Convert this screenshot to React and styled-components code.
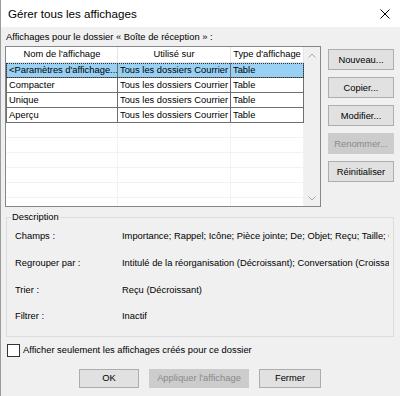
import React from 'react';
import styled, { createGlobalStyle } from 'styled-components';

const GlobalStyle = createGlobalStyle`
  html, body { margin: 0; padding: 0; }
  body {
    font-family: "Liberation Sans", Arial, sans-serif;
    font-size: 9.35px;
    color: #000;
    background: #f0f0f0;
  }
`;

const Window = styled.div`
  width: 400px;
  height: 396px;
  box-sizing: border-box;
  border-left: 1px solid #9b9b9b;
  background: #f0f0f0;
  display: flex;
  flex-direction: column;
  overflow: hidden;
`;

const TitleBar = styled.div`
  height: 27px;
  flex: none;
  background: #fff;
  display: flex;
  align-items: center;
  justify-content: space-between;
  padding: 0 10px 0 7px;
  font-size: 11.6px;
  color: #000;
`;

const Body = styled.div`
  padding: 4px 6px 0 4px;
  display: flex;
  flex-direction: column;
`;

const Caption = styled.div`
  line-height: 12px;
  margin-left: 1px;
  margin-bottom: 3px;
`;

const TopRow = styled.div`
  display: flex;
  gap: 7px;
  align-items: flex-start;
`;

const ListBox = styled.div`
  width: 316px;
  height: 161px;
  box-sizing: border-box;
  border: 1px solid #828790;
  background: #fff;
  display: flex;
`;

const Grid = styled.div`
  width: 298px;
  display: flex;
  flex-direction: column;
  overflow: hidden;
`;

const Row = styled.div`
  display: grid;
  grid-template-columns: 112px 113px 73px;
  height: ${p => (p.$head ? 16 : 15)}px;
  background: ${p => (p.$selected ? '#99d1f4' : 'transparent')};
  outline: ${p => (p.$selected ? '1px dotted #333' : 'none')};
  outline-offset: -1px;
  flex: none;
`;

const Cell = styled.div`
  box-sizing: border-box;
  padding: 0 2px;
  line-height: 14px;
  white-space: nowrap;
  overflow: hidden;
  text-align: ${p => (p.$center ? 'center' : 'left')};
  border-right: 1px solid ${p => p.$line};
  border-bottom: 1px solid ${p => p.$line};
  &:first-child {
    border-left: 1px solid ${p => (p.$first ? p.$line : 'transparent')};
  }
`;

const Scroll = styled.div`
  flex: 1;
  background: #f0f0f0;
  display: flex;
  flex-direction: column;
  justify-content: space-between;
  align-items: center;
  padding: 6px 0 5px;
  color: #a6a6a6;
`;

const SideButtons = styled.div`
  display: flex;
  flex-direction: column;
  gap: 7px;
  padding-top: 3px;
`;

const Button = styled.button`
  font: inherit;
  width: ${p => p.$w || 66}px;
  height: ${p => p.$h || 21}px;
  padding: 0;
  box-sizing: border-box;
  background: ${p => (p.disabled ? '#cccccc' : '#e1e1e1')};
  border: 1px solid ${p => (p.disabled ? '#cccccc' : '#adadad')};
  color: ${p => (p.disabled ? '#8a8a8a' : '#000')};
  border-radius: 0;
`;

const Group = styled.fieldset`
  margin: 4px 0 0 1px;
  width: 388px;
  box-sizing: border-box;
  border: 1px solid #dcdcdc;
  padding: 0 4px 6px 8px;
  min-width: 0;
`;

const Legend = styled.legend`
  padding: 0 1px;
  margin-left: -4px;
  line-height: 12px;
  color: #000;
`;

const Props = styled.div`
  display: grid;
  grid-template-columns: 107px 1fr;
  grid-auto-rows: 26.7px;
  align-items: center;
`;

const PropText = styled.div`
  white-space: nowrap;
  overflow: hidden;
`;

const CheckRow = styled.label`
  display: flex;
  align-items: center;
  gap: 3px;
  margin: 7px 0 0 2px;
  line-height: 13px;
`;

const Box = styled.span`
  width: 13px;
  height: 13px;
  box-sizing: border-box;
  border: 1px solid #333;
  background: #fff;
  flex: none;
`;

const Footer = styled.div`
  display: flex;
  justify-content: center;
  gap: 10px;
  margin-top: 12px;
  padding-left: 1px;
`;

const Chevron = ({ down }) => (
  <svg width="8" height="5" viewBox="0 0 8 5">
    <path d={down ? 'M0.5 0.5 L4 4 L7.5 0.5' : 'M0.5 4.5 L4 1 L7.5 4.5'} fill="none" stroke="currentColor" strokeWidth="1" />
  </svg>
);

const CloseIcon = () => (
  <svg width="10" height="10" viewBox="0 0 10 10">
    <path d="M0.5 0.5 L9.5 9.5 M9.5 0.5 L0.5 9.5" stroke="#000" strokeWidth="1" />
  </svg>
);

const views = [
  ['<Paramètres d\'affichage...', 'Tous les dossiers Courrier', 'Table'],
  ['Compacter', 'Tous les dossiers Courrier', 'Table'],
  ['Unique', 'Tous les dossiers Courrier', 'Table'],
  ['Aperçu', 'Tous les dossiers Courrier', 'Table'],
];

const details = [
  ['Champs :', 'Importance; Rappel; Icône; Pièce jointe; De; Objet; Reçu; Taille; Catégories'],
  ['Regrouper par :', 'Intitulé de la réorganisation (Décroissant); Conversation (Croissant)'],
  ['Trier :', 'Reçu (Décroissant)'],
  ['Filtrer :', 'Inactif'],
];

export default function App() {
  return (
    <>
      <GlobalStyle />
      <Window>
        <TitleBar>
          <span>Gérer tous les affichages</span>
          <CloseIcon />
        </TitleBar>
        <Body>
          <Caption>Affichages pour le dossier « Boîte de réception » :</Caption>
          <TopRow>
            <ListBox>
              <Grid>
                <Row $head>
                  <Cell $center $line="#e5e5e5">Nom de l'affichage</Cell>
                  <Cell $center $line="#e5e5e5">Utilisé sur</Cell>
                  <Cell $center $line="#e5e5e5">Type d'affichage</Cell>
                </Row>
                {views.map((v, i) => (
                  <Row key={i} $selected={i === 0}>
                    <Cell $first $line="#6e6e6e">{v[0]}</Cell>
                    <Cell $line="#6e6e6e">{v[1]}</Cell>
                    <Cell $line="#6e6e6e">{v[2]}</Cell>
                  </Row>
                ))}
                {Array.from({ length: 6 }).map((_, i) => (
                  <Row key={'e' + i}>
                    <Cell $line="#f2f2f2" />
                    <Cell $line="#f2f2f2" />
                    <Cell $line="#f2f2f2" />
                  </Row>
                ))}
              </Grid>
              <Scroll>
                <Chevron />
                <Chevron down />
              </Scroll>
            </ListBox>
            <SideButtons>
              <Button>Nouveau...</Button>
              <Button>Copier...</Button>
              <Button>Modifier...</Button>
              <Button disabled>Renommer...</Button>
              <Button>Réinitialiser</Button>
            </SideButtons>
          </TopRow>
          <Group>
            <Legend>Description</Legend>
            <Props>
              {details.map(([k, v]) => (
                <React.Fragment key={k}>
                  <PropText>{k}</PropText>
                  <PropText>{v}</PropText>
                </React.Fragment>
              ))}
            </Props>
          </Group>
          <CheckRow>
            <Box />
            Afficher seulement les affichages créés pour ce dossier
          </CheckRow>
          <Footer>
            <Button $w={60} $h={19}>OK</Button>
            <Button $w={100} $h={19} disabled>Appliquer l'affichage</Button>
            <Button $w={62} $h={19}>Fermer</Button>
          </Footer>
        </Body>
      </Window>
    </>
  );
}
